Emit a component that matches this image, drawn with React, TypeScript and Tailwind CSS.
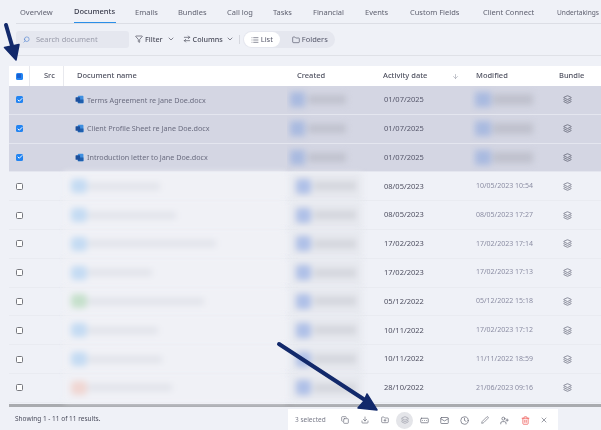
import {
  Search, Funnel, ChevronDown, ArrowRightLeft, List, Folder, ArrowDown, Layers, Copy, Download,
  FolderPlus, RectangleEllipsis, Mail, Clock, Pen, UserPlus, Trash2, X, Check,
} from 'lucide-react'

const tabs = [
  { label: 'Overview', cls: 'w-[54px] pl-[4px]' },
  { label: 'Documents', cls: 'w-[42px] ml-[4px]' },
  { label: 'Emails', cls: 'w-[43px] ml-[19px]' },
  { label: 'Bundles', cls: 'w-[49px]' },
  { label: 'Call log', cls: 'w-[46px]' },
  { label: 'Tasks', cls: 'w-[40px]' },
  { label: 'Financial', cls: 'w-[52px]' },
  { label: 'Events', cls: 'w-[45px]' },
  { label: 'Custom Fields', cls: 'w-[73px]' },
  { label: 'Client Connect', cls: 'w-[74px]' },
  { label: 'Undertakings', cls: 'w-[42px] text-[6.6px]' },
]

const selected = [
  'Terms Agreement re Jane Doe.docx',
  'Client Profile Sheet re Jane Doe.docx',
  'Introduction letter to Jane Doe.docx',
]

const rows = [
  { nameW: 'w-[72px]', icon: 'bg-[#c4dbf3]', activity: '08/05/2023', modified: '10/05/2023 10:54' },
  { nameW: 'w-[88px]', icon: 'bg-[#c4dbf3]', activity: '08/05/2023', modified: '08/05/2023 17:27' },
  { nameW: 'w-[128px]', icon: 'bg-[#c4dbf3]', activity: '17/02/2023', modified: '17/02/2023 17:14' },
  { nameW: 'w-[64px]', icon: 'bg-[#c4dbf3]', activity: '17/02/2023', modified: '17/02/2023 17:13' },
  { nameW: 'w-[116px]', icon: 'bg-[#c5e0cb]', activity: '05/12/2022', modified: '05/12/2022 15:18' },
  { nameW: 'w-[70px]', icon: 'bg-[#c4dbf3]', activity: '10/11/2022', modified: '17/02/2023 17:12' },
  { nameW: 'w-[74px]', icon: 'bg-[#c4dbf3]', activity: '10/11/2022', modified: '11/11/2022 18:59' },
  { nameW: 'w-[84px]', icon: 'bg-[#f0d6d2]', activity: '28/10/2022', modified: '21/06/2023 09:16' },
]

const gridCols = 'grid grid-cols-[21px_34px_223px_85px_98px_79px_52px]'

function WordIcon() {
  return (
    <svg viewBox="0 0 16 16" className="w-[9px] h-[9px] shrink-0">
      <rect x="5" y="1.5" width="10" height="13" rx="1.5" fill="#3f8fe0" />
      <rect x="5" y="8" width="10" height="6.5" fill="#1f5fae" />
      <rect x="1" y="4" width="8" height="8" rx="1" fill="#1b4f9c" />
    </svg>
  )
}

function CreatedBlur() {
  return (
    <div className="ml-[3px] h-[27px] w-[72px] flex items-center bg-[#e6e8ee] blur-[3px] overflow-hidden">
      <div className="ml-[6px] w-[15px] h-[15px] rounded-sm bg-[#afc0e8]" />
      <div className="ml-[3px] w-[42px] h-[8px] bg-[#d3d5dc]" />
    </div>
  )
}

function SelectedRow({ name }: { name: string }) {
  return (
    <div className={`${gridCols} h-[28.8px] items-center bg-[#d4d6e3] border-b border-[#e4e6ef]`}>
      <div className="flex justify-center">
        <span className="w-[7px] h-[7px] rounded-[1.5px] bg-[#2284f2] flex items-center justify-center">
          <Check className="w-[6px] h-[6px] text-white" strokeWidth={4} />
        </span>
      </div>
      <div />
      <div className="flex items-center gap-[3px] pl-[11px] text-[7.2px] text-[#6b6d80]">
        <WordIcon />
        <span>{name}</span>
      </div>
      <div className="overflow-hidden">
        <div className="ml-[3px] h-[28px] w-[58px] flex items-center blur-[3px]">
          <div className="w-[15px] h-[15px] bg-[#a9bae0]" />
          <div className="ml-[3px] w-[38px] h-[9px] bg-[#c0c2ce]" />
        </div>
      </div>
      <div className="pl-[12px] text-[7.5px] text-[#55566a]">01/07/2025</div>
      <div className="overflow-hidden">
        <div className="ml-[5px] h-[27px] w-[60px] flex items-center blur-[3px]">
          <div className="w-[16px] h-[15px] bg-[#a9bae0]" />
          <div className="ml-[2px] w-[40px] h-[11px] bg-[#bfc1cd]" />
        </div>
      </div>
      <div className="pl-[14px]">
        <Layers className="w-[9px] h-[9px] text-[#5f6272]" />
      </div>
    </div>
  )
}

function PlainRow({ nameW, icon, activity, modified }: (typeof rows)[number]) {
  return (
    <div className={`${gridCols} h-[28.8px] items-center border-b border-[#e9ebf1]`}>
      <div className="flex justify-center">
        <span className="w-[7px] h-[7px] rounded-[1.5px] border border-[#77797f] bg-white" />
      </div>
      <div />
      <div className="h-full bg-[#f0f1f6] flex items-center pl-[7px] blur-[3px]">
        <div className={`w-[16px] h-[14px] rounded-sm ${icon}`} />
        <div className={`ml-[1px] h-[7px] bg-[#e1e3ea] ${nameW}`} />
      </div>
      <CreatedBlur />
      <div className="pl-[12px] text-[7.5px] text-[#4e4f60]">{activity}</div>
      <div className="pl-[6px] text-[7px] text-[#8b8da3]">{modified}</div>
      <div className="pl-[14px]">
        <Layers className="w-[9px] h-[9px] text-[#6e7080]" />
      </div>
    </div>
  )
}

export default function App() {
  return (
    <div className="relative w-[601px] h-[430px] overflow-hidden bg-[#eff1f7] font-['Inter',sans-serif] blur-[0.3px]">
      {/* tabs */}
      <div className="ml-[16px] h-[24px] flex items-stretch border-b border-[#dcdee5] text-[7.5px] text-[#5f6170]">
        {tabs.map((t) => (
          <div
            key={t.label}
            className={`${t.cls} shrink-0 whitespace-nowrap flex items-center pt-[2px] ${t.label === 'Documents' ? 'text-[#3a3c4c] font-medium border-b-[1px] border-[#2b8fe8]' : ''}`}
          >
            {t.label}
          </div>
        ))}
      </div>

      {/* toolbar */}
      <div className="ml-[16px] h-[32px] flex items-center border-b border-[#dfe1e7] text-[7.5px]">
        <div className="w-[113px] h-[17px] rounded-[3px] bg-[#e5e7ef] flex items-center pl-[7px] gap-[6px] text-[#9a9cab]">
          <Search className="w-[7px] h-[7px] text-[#4c7fd0] -scale-x-100" />
          Search document
        </div>
        <div className="ml-[6px] flex items-center gap-[2px] text-[7.2px] font-medium text-[#4b4d5c]">
          <Funnel className="w-[8px] h-[8px]" />
          Filter
          <ChevronDown className="ml-[2px] w-[8px] h-[8px]" />
        </div>
        <div className="ml-[8px] flex items-center gap-[2px] text-[7.2px] font-medium text-[#4b4d5c]">
          <ArrowRightLeft className="w-[8px] h-[8px]" />
          Columns
          <ChevronDown className="ml-[1px] w-[8px] h-[8px]" />
        </div>
        <div className="ml-[5px] h-[9px] w-px bg-[#d6d8df]" />
        <div className="ml-[3px] h-[17px] rounded-full bg-[#e5e7ef] flex items-center">
          <div className="h-[15px] w-[36px] ml-[1px] rounded-full bg-white flex items-center justify-center gap-[2px] text-[#55576a]">
            <List className="w-[8px] h-[8px]" />
            List
          </div>
          <div className="pl-[12px] pr-[7px] flex items-center gap-[2px] text-[#55576a]">
            <Folder className="w-[8px] h-[8px]" />
            Folders
          </div>
        </div>
      </div>

      {/* table */}
      <div className="ml-[9px] mt-[10px]">
        <div className={`${gridCols} h-[20px] items-center bg-white text-[7.5px] font-medium text-[#4f5160]`}>
          <div className="h-full flex items-center justify-center border-r border-[#e8e9ee]">
            <span className="w-[7px] h-[7px] rounded-[1.5px] bg-[#2284f2] flex items-center justify-center">
              <span className="w-[4px] h-[4px] bg-[#1a5fd0]" />
            </span>
          </div>
          <div className="h-full flex items-center pl-[14px] border-r border-[#e8e9ee]">Src</div>
          <div className="pl-[13px]">Document name</div>
          <div className="pl-[10px]">Created</div>
          <div className="pl-[11px] flex items-center justify-between pr-[11px]">
            Activity date
            <ArrowDown className="w-[7px] h-[7px] text-[#9a9ca8]" />
          </div>
          <div className="pl-[6px]">Modified</div>
          <div className="pl-[10px]">Bundle</div>
        </div>
        {selected.map((name) => (
          <SelectedRow key={name} name={name} />
        ))}
        {rows.map((r) => (
          <PlainRow key={r.modified} {...r} />
        ))}
      </div>

      {/* scrollbar + footer */}
      <div className="ml-[9px] mt-[1px] h-[3px] bg-[#a9abaf]" />
      <div className="h-[25px] flex items-center justify-between pl-[15px] pr-[43px] text-[6.5px] text-[#4a4c5c]">
        <span>Showing 1 - 11 of 11 results.</span>
        <div className="h-[23px] w-[270px] mt-[2px] bg-white flex items-center pl-[7px] text-[#7a7c8a]">
          <span className="w-[46px]">3 selected</span>
          <div className="flex items-center text-[#6a6c7a]">
            <Copy className="w-[8px] h-[8px]" />
            <Download className="w-[8px] h-[8px] ml-[12px]" />
            <FolderPlus className="w-[8px] h-[8px] ml-[12px]" />
            <span className="ml-[7px] w-[17px] h-[17px] rounded-full bg-[#e4e5e9] flex items-center justify-center">
              <Layers className="w-[8px] h-[8px] text-[#9a9ca8]" />
            </span>
            <RectangleEllipsis className="w-[9px] h-[9px] ml-[7px]" />
            <Mail className="w-[9px] h-[9px] ml-[11px]" />
            <Clock className="w-[9px] h-[9px] ml-[11px]" />
            <Pen className="w-[8px] h-[8px] ml-[12px]" />
            <UserPlus className="w-[9px] h-[9px] ml-[11px]" />
            <Trash2 className="w-[9px] h-[9px] ml-[12px] text-[#ee5a55]" />
            <X className="w-[8px] h-[8px] ml-[10px]" />
          </div>
        </div>
      </div>

      {/* annotation arrows */}
      <svg className="absolute inset-0 w-[601px] h-[430px] pointer-events-none" viewBox="0 0 601 430" fill="none">
        <path d="M6 25 L15 56" stroke="#12296b" strokeWidth="4" strokeLinecap="round" />
        <path d="M4.5 47.5 L16 60 L19 44.5 Z" fill="#12296b" stroke="#12296b" strokeWidth="1.5" strokeLinejoin="round" />
        <path d="M279 344 L368 402" stroke="#12296b" strokeWidth="4" strokeLinecap="round" />
        <path d="M358 408 L377 410 L367 394 L364 401 Z" fill="#12296b" stroke="#12296b" strokeWidth="1.5" strokeLinejoin="round" />
      </svg>
    </div>
  )
}
